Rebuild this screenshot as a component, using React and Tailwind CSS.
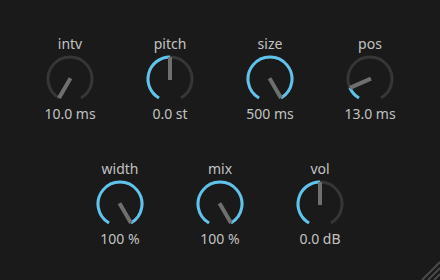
import React from "react";

const MIN_ANGLE = -150;
const MAX_ANGLE = 150;

const punto = (angulo, radio) => {
	const rad = (angulo * Math.PI) / 180;
	return [25 + radio * Math.sin(rad), 25 - radio * Math.cos(rad)];
};

const arco = (desde, hasta, radio) => {
	const [x0, y0] = punto(desde, radio);
	const [x1, y1] = punto(hasta, radio);
	const grande = hasta - desde > 180 ? 1 : 0;
	return `M ${x0} ${y0} A ${radio} ${radio} 0 ${grande} 1 ${x1} ${y1}`;
};

function Knob({ label, value, angle }) {
	const [px, py] = punto(angle, 22);
	const [sx, sy] = punto(angle + 180, 1);
	return (
		<div className="flex w-[100px] flex-col items-center">
			<div className="h-5 text-[14px] leading-5 text-[#c2c2c2]">{label}</div>
			<svg width="50" height="50" viewBox="0 0 50 50">
				<path
					d={arco(MIN_ANGLE, MAX_ANGLE, 22)}
					fill="none"
					stroke="#363636"
					strokeWidth="3"
				/>
				{angle > MIN_ANGLE + 0.5 && (
					<path
						d={arco(MIN_ANGLE, angle, 22)}
						fill="none"
						stroke="#5fc3ec"
						strokeWidth="3"
					/>
				)}
				<line x1={sx} y1={sy} x2={px} y2={py} stroke="#6f6f6f" strokeWidth="4" />
			</svg>
			<div className="h-5 text-[14px] leading-5 text-[#c2c2c2]">{value}</div>
		</div>
	);
}

const fila1 = [
	{ label: "intv", value: "10.0 ms", angle: -150 },
	{ label: "pitch", value: "0.0 st", angle: 0 },
	{ label: "size", value: "500 ms", angle: 150 },
	{ label: "pos", value: "13.0 ms", angle: -114 },
];

const fila2 = [
	{ label: "width", value: "100 %", angle: 150 },
	{ label: "mix", value: "100 %", angle: 150 },
	{ label: "vol", value: "0.0 dB", angle: 0 },
];

export default function App() {
	return (
		<div
			className="relative flex h-[280px] w-[440px] flex-col gap-[35px] bg-[#1a1a1a] pt-[34px]"
			style={{ fontFamily: '"Noto Sans", "Open Sans", sans-serif' }}>
			<div className="flex justify-center">
				{fila1.map((k) => (
					<Knob key={k.label} {...k} />
				))}
			</div>
			<div className="flex justify-center">
				{fila2.map((k) => (
					<Knob key={k.label} {...k} />
				))}
			</div>

			{/* grip de redimension */}
			<svg
				className="absolute bottom-0 right-0"
				width="20"
				height="20"
				viewBox="0 0 20 20">
				<line x1="20" y1="2" x2="2" y2="20" stroke="#4a4a4a" strokeWidth="2" />
				<line x1="20" y1="8" x2="8" y2="20" stroke="#4a4a4a" strokeWidth="2" />
				<line x1="20" y1="14" x2="14" y2="20" stroke="#4a4a4a" strokeWidth="2" />
			</svg>
		</div>
	);
}
